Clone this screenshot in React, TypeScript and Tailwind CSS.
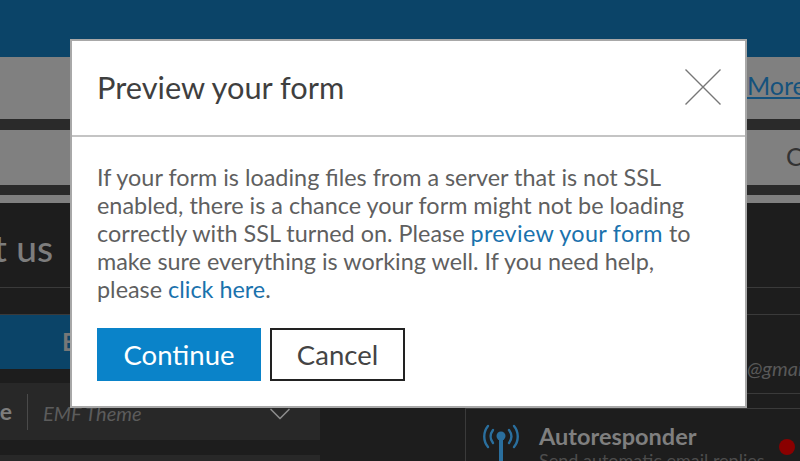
import React from 'react';
import { ChevronDown } from 'lucide-react';

const Autoresponder = () => (
  <div className="flex-1 border-l border-[#3a3a3a] flex pl-[15px] pt-[15px] relative">
    <svg width="40" height="40" viewBox="0 0 40 40" fill="none" stroke="#2a6f9e" strokeWidth="2.4" strokeLinecap="round" className="shrink-0">
      <path d="M7 2 C2 8 2 17 7 23" />
      <path d="M12 6 C9 10 9 15 12 19" />
      <path d="M33 2 C38 8 38 17 33 23" />
      <path d="M28 6 C31 10 31 15 28 19" />
      <circle cx="20" cy="12" r="4.5" fill="#2a6f9e" stroke="none" />
      <path d="M20 14 V40" strokeWidth="4" strokeLinecap="butt" />
    </svg>
    <div className="ml-[18px] -mt-[1px]">
      <div className="text-[23.5px] leading-[26px] font-bold text-[#7f7f7f] whitespace-nowrap">Autoresponder</div>
      <div className="text-[18px] leading-[22px] text-[#4c4c4c] whitespace-nowrap">Send automatic email replies</div>
    </div>
    <div className="absolute right-[5px] top-[30px] w-4 h-4 rounded-full bg-[#8a0000]" />
  </div>
);

export default function App() {
  return (
    <div className="relative w-[800px] h-[461px] overflow-hidden bg-[#1d1d1d] font-['Lato',sans-serif]">
      <div className="h-[57px] bg-[#0b4468]" />
      <div className="h-[62px] bg-[#808080] flex justify-end items-center pb-[5px]">
        <span className="text-[25px] text-[#15527d] underline underline-offset-2 whitespace-nowrap w-[53px] overflow-hidden">More</span>
      </div>
      <div className="h-[11px] bg-[#2a2a2a]" />
      <div className="h-[55px] bg-[#808080] flex justify-end items-center pb-[2px]">
        <span className="text-[25px] text-[#333333] w-[14px] overflow-hidden">C</span>
      </div>
      <div className="h-[10px] bg-[#2a2a2a]" />
      <div className="h-[8px] bg-[#808080]" />

      <div className="h-[85px] border-b border-[#3a3a3a] flex items-center pt-[6px]">
        <div className="w-[53px] flex justify-end overflow-hidden">
          <span className="text-[37px] font-medium text-[#7d7d7d] whitespace-nowrap">Contact us</span>
        </div>
      </div>

      <div className="flex h-[173px]">
        <div className="w-[465px] shrink-0">
          <div className="h-[27px]" />
          <div className="h-[54px] bg-[#0b4468] pl-[62px] flex items-center">
            <span className="text-[24px] font-bold text-[#777777]">E</span>
          </div>
          <div className="h-[14px]" />
          <div className="w-[320px] h-[57px] bg-[#282828] flex items-center">
            <div className="w-[12px] flex justify-end overflow-hidden">
              <span className="text-[23px] font-bold text-[#7d7d7d] whitespace-nowrap">Theme</span>
            </div>
            <div className="w-px h-[36px] bg-[#4a4a4a] ml-[15px]" />
            <span className="ml-[15px] mt-[2px] text-[20px] italic text-[#5c5c5c] whitespace-nowrap">EMF Theme</span>
            <ChevronDown size={36} strokeWidth={1.1} className="ml-auto mr-[22px] mt-[4px] text-[#8a8a8a]" />
          </div>
          <div className="h-[15px]" />
          <div className="w-[320px] h-[6px] bg-[#282828]" />
        </div>
        <div className="flex-1 flex flex-col min-w-0">
          <div className="h-[27px] border-b border-[#3a3a3a] -ml-[465px]" />
          <div className="h-[79px] border-b border-[#3a3a3a] flex justify-end items-end overflow-hidden pb-[10px]">
            <span className="text-[20px] italic text-[#585858] whitespace-nowrap w-[53px] overflow-hidden">@gmail.com</span>
          </div>
          <div className="h-[15px] border-b border-[#3a3a3a]" />
          <div className="flex-1 flex min-h-0">
            <Autoresponder />
          </div>
        </div>
      </div>

      {/* Modal */}
      <div className="absolute left-[70px] top-[39px] w-[677px] h-[369px] bg-white border-2 border-[#a8a8a8] flex flex-col">
        <div className="h-[96px] shrink-0 border-b-2 border-[#c4c4c4] flex items-center justify-between pl-[25px] pr-[24px]">
          <h2 className="text-[30.75px] text-[#3f3f3f] pt-[1px]">Preview your form</h2>
          <svg width="36" height="36" viewBox="0 0 36 36" stroke="#777777" strokeWidth="1.4" className="-mt-[2px]">
            <path d="M0.5 0.5 L35.5 35.5 M35.5 0.5 L0.5 35.5" />
          </svg>
        </div>
        <div className="px-[25px] pt-[26px]">
          <p className="text-[23.4px] leading-[28px] text-[#5f5f5f] w-[600px]">
            If your form is loading files from a server that is not SSL enabled, there is a chance your form might not be loading correctly with SSL turned on. Please <a className="text-[#1a72ad] tracking-[0.3px]">preview your form</a> to make sure everything is working well. If you need help, please <a className="text-[#1a72ad]">click here</a>.
          </p>
          <div className="flex gap-[9px] mt-[25px]">
            <button className="w-[164px] h-[53px] bg-[#0a83c9] text-white text-[27.5px]">Continue</button>
            <button className="w-[135px] h-[53px] border-2 border-[#222222] text-[#444444] text-[27.5px]">Cancel</button>
          </div>
        </div>
      </div>
    </div>
  );
}
